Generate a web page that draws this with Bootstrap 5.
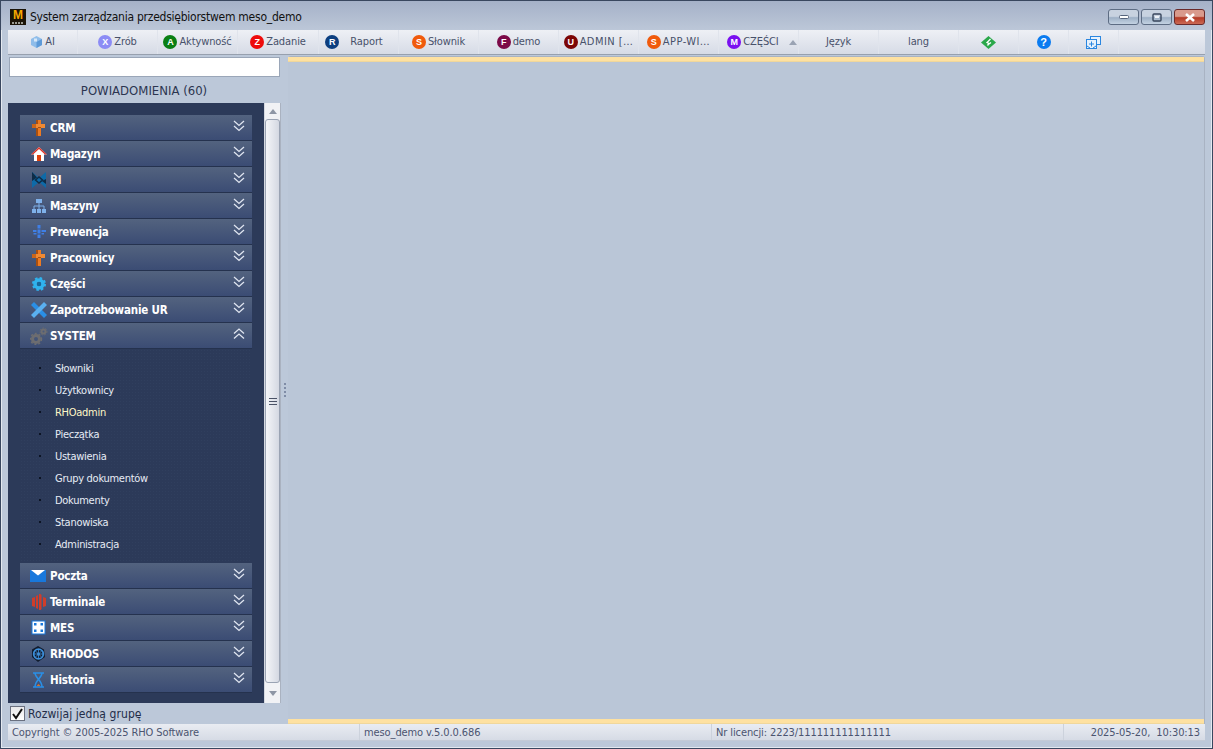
<!DOCTYPE html>
<html lang="pl"><head><meta charset="utf-8"><title>meso_demo</title>
<link href="https://cdn.jsdelivr.net/npm/bootstrap@5.3.0/dist/css/bootstrap.min.css" rel="stylesheet">
<style>
html,body{height:100%;overflow:hidden}
body{background:#bcc8d9;font-family:"DejaVu Sans Condensed","DejaVu Sans",sans-serif;font-size:11px;color:#2f3a55}
.win{width:1213px;height:749px;border:1px solid #39475f;box-shadow:inset 0 0 0 1px #e4e9f0}
.titlebar{height:29px;background:linear-gradient(#a5b1c8,#bcc7d8);padding:3px 0 0 9px;color:#111;font-size:12px;font-family:"DejaVu Sans Condensed","DejaVu Sans",sans-serif;letter-spacing:-.25px}
.logo{width:16px;height:16px;background:#1a1408;color:#f5a800;font:bold 12px/12px "Liberation Sans",sans-serif;text-align:center;letter-spacing:0;position:relative}
.logo::after{content:"";position:absolute;left:2px;right:2px;bottom:1px;height:2px;background-image:linear-gradient(90deg,#9a9a92 2px,transparent 2px);background-size:3px 2px}
.ctl{width:31px;height:16px;margin-left:2px;border:1px solid #5d6c83;border-radius:3px;background:linear-gradient(#c8d2e0 45%,#9eb0c6 55%,#c3d2e2)}
.ctl.closer{width:31px;background:linear-gradient(#d99a8c 45%,#b43a26 55%,#cc6a55);border-color:#6b2a2a}
.wctl{margin-right:7px}
.toolbar{margin:0 7px;height:25px;background:linear-gradient(#eef0f5,#d6dbe6);border-bottom:1px solid #97a0ae}
.tool{height:24px;width:80px;border-right:1px solid #e0e4ec;color:#48516a;font-size:11px;gap:2px;white-space:nowrap;letter-spacing:-.12px}
.tool.w70{width:70px}.tool.w81{width:81px}.tool.w60{width:60px}.tool.w50{width:50px}
.tool.pushed{padding-left:7px}
.tool.pulled{padding-right:9px}
.tool .gapped{margin-left:9px}
.tool .wide{letter-spacing:.45px}
.disc{width:14px;height:14px;border-radius:50%;color:#fff;font:bold 9px/14px "Liberation Sans",sans-serif;text-align:center;flex:none;letter-spacing:0}
.discq{font-size:11px}
.upmark{width:0;height:0;border:4px solid transparent;border-bottom:5px solid #9aa3b3;border-top:0;margin-left:8px}
.content{height:669px;margin:0 7px}
.leftcol{width:273px;flex:none}
.searchbox{display:block;width:271px;height:20px;margin:2px 0 0 1px;border:1px solid #9aa6b8;background:#fff;border-radius:0;padding:0}
.notif{height:26px;color:#2c3550;font-size:13px;width:272px;padding-top:1px}
.navpanel{width:273px;height:600px}
.darkbox{width:256px;background:#2c3a59;padding:12px 12px 0}
.grp{height:26px;width:232px;background:linear-gradient(#53637f,#3b4c74);border-bottom:1px solid #25324e;color:#fff;font:bold 11.5px "DejaVu Sans Condensed","DejaVu Sans",sans-serif;letter-spacing:-.2px;padding:0 6px 0 10px}
.grp .ico{width:18px;height:18px;flex:none;margin-right:2px}
.grp .lbl{flex:1}
.chev{width:14px;height:12px;margin-top:-4px;flex:none}
.subs{width:232px;height:214px;margin:0;padding:9px 0 0;background-color:#2c3a59;background-image:radial-gradient(#303f5e .7px,transparent .8px);background-size:3px 3px}
.sub{height:22px;color:#e7ecf5;font-size:11px;padding-left:35px;position:relative;letter-spacing:-.28px}
.sub.hot{color:#fff7c8}
.sub::before{content:"";position:absolute;left:19px;top:9px;width:2px;height:2px;background:#0c1424}
.sbar{width:17px;background:#f1f2f5;border-left:1px solid #d5d9e1;border-right:1px solid #aab2c0}
.sbtn{height:16px;color:#8e96a5}
.sbtn.lower{height:20px}
.sthumb{flex:1;margin:0;border:1px solid #9aa3b3;border-radius:3px;background:linear-gradient(90deg,#f4f5f8,#d4d8e2)}
.grip3{width:8px;height:7px;border-top:1px solid #4a5266;border-bottom:1px solid #4a5266;position:relative}
.grip3::after{content:"";position:absolute;left:0;right:0;top:2px;height:1px;background:#4a5266}
.splitter{width:7px;flex:none}
.sdots{width:2px;height:14px;background-image:linear-gradient(#7f8ca6 2px,transparent 2px);background-size:2px 4px}
.mainp{flex:1;height:668px;margin-top:1px;background:#bac6d7;border:1px solid #a9b3c3;border-width:1px 1px 0 0;border-radius:3px 3px 0 0}
.yband{height:5px;background:#fee1a1;border-bottom:1px solid #f0d79c}
.chk{height:21px;color:#222c48;font-size:12px;letter-spacing:.07px;gap:3px;padding-left:2px}
.fakechk{width:15px;height:15px;background:linear-gradient(#e8e8ea,#fff);border:1px solid #6a7080}
.statusbar{margin:0 7px;height:17px;background:linear-gradient(#e9ecf2,#d6dbe5);color:#4b5470;font-size:11px;border-bottom:1px solid #c3cad6;letter-spacing:-.1px}
.stcell{height:16px;padding:1px 0 0 4px;white-space:nowrap;border-right:1px solid #ccd2dc;width:352px}
.stcell.last{width:141px;border:0;padding-right:5px}
</style></head><body>
<div class="win d-flex flex-column">
 <div class="titlebar d-flex align-items-center">
  <div class="logo me-1">M</div><span class="flex-grow-1">System zarządzania przedsiębiorstwem meso_demo</span>
  <div class="d-flex wctl">
   <div class="ctl d-flex align-items-center justify-content-center"><svg width="10" height="4"><rect x=".5" y=".5" width="9" height="3" rx="1" fill="#fff" stroke="#56657d"/></svg></div>
   <div class="ctl d-flex align-items-center justify-content-center"><svg width="10" height="9"><rect x="1" y="1" width="8" height="7" rx="1" fill="none" stroke="#38465c" stroke-width="1.4"/><rect x="3" y="3" width="4" height="2" fill="#eef2f8"/></svg></div>
   <div class="ctl closer d-flex align-items-center justify-content-center"><svg width="12" height="9"><path d="M2 1l8 7M10 1l-8 7" stroke="#fff" stroke-width="2.6"/></svg></div>
  </div>
 </div>
 <div class="toolbar d-flex">
  <div class="tool w70 d-flex align-items-center justify-content-center"><svg width="13" height="14" viewBox="0 0 13 14"><path d="M6.500 1 12 4v6l-5.500 3L1 10V4z" fill="#8fbdea"/><path d="M6.500 7 12 4v6l-5.500 3z" fill="#5d9ad8"/><path d="M4 3.500h3v3H4z" fill="#d8e8f8"/></svg><span>AI</span></div>
  <div class="tool d-flex align-items-center justify-content-center"><span class="disc" style="background:#8c8cf5">X</span><span>Zrób</span></div>
  <div class="tool d-flex align-items-center justify-content-center"><span class="disc" style="background:#0a7f14">A</span><span>Aktywność</span></div>
  <div class="tool w81 d-flex align-items-center justify-content-center"><span class="disc" style="background:#ee0b0b">Z</span><span>Zadanie</span></div>
  <div class="tool pulled d-flex align-items-center justify-content-center"><span class="disc" style="background:#0d3f80">R</span><span class="gapped">Raport</span></div>
  <div class="tool d-flex align-items-center justify-content-center"><span class="disc" style="background:#f05a0c">S</span><span>Słownik</span></div>
  <div class="tool d-flex align-items-center justify-content-center"><span class="disc" style="background:#7c0a48">F</span><span>demo</span></div>
  <div class="tool d-flex align-items-center justify-content-center"><span class="disc" style="background:#7c0606">U</span><span class="wide">ADMIN […</span></div>
  <div class="tool d-flex align-items-center justify-content-center"><span class="disc" style="background:#f05a0c">S</span><span class="wide">APP-WI…</span></div>
  <div class="tool pushed d-flex align-items-center justify-content-center"><span class="disc" style="background:#7a10f0">M</span><span>CZĘŚCI</span><span class="upmark"></span></div>
  <div class="tool d-flex align-items-center justify-content-center"><span>Język</span></div>
  <div class="tool d-flex align-items-center justify-content-center"><span>lang</span></div>
  <div class="tool w60 d-flex align-items-center justify-content-center"><svg width="15" height="13" viewBox="0 0 15 13"><path d="M7.500 0 15 6.500 7.500 13 0 6.500z" fill="#2aa84a"/><path d="M9.500 3 6 6.500l2 1-1.500 2M10 6.500 8 8" stroke="#fff" stroke-width="1.300" fill="none"/></svg></div>
  <div class="tool w50 d-flex align-items-center justify-content-center"><span class="disc discq" style="background:#0a7bf0">?</span></div>
  <div class="tool w50 d-flex align-items-center justify-content-center"><svg width="15" height="13" viewBox="0 0 15 13" fill="none" stroke="#2a86e0"><rect x="4.500" y=".5" width="10" height="8" fill="#e8f2fc"/><rect x=".5" y="3.500" width="10" height="9" fill="#e8f2fc"/><path d="M3 8h5M5.500 5.500v5M1 10l3 2M10 10l-3 2"/></svg></div>
 </div>
 <div class="content d-flex">
  <div class="leftcol d-flex flex-column">
   <input class="searchbox" type="text" aria-label="Szukaj">
   <div class="notif d-flex align-items-center justify-content-center">POWIADOMIENIA (60)</div>
   <div class="navpanel d-flex">
    <div class="darkbox">
     <div class="grp d-flex align-items-center"><svg class="ico" viewBox="0 0 18 18"><path d="M6 1h5v16H6z" fill="#ed7a22"/><path d="M6 1h2v16H6z" fill="#a84f10"/><path d="M2 5h13v4H2z" fill="#f08a33"/><path d="M2 5h4v4H2z" fill="#c9651a"/><path d="M8 8h3v1H8z" fill="#a84f10"/></svg><span class="lbl">CRM</span><svg class="chev" viewBox="0 0 14 12" fill="none" stroke="#dfe5f0" stroke-width="1.300"><path d="M2 1l5 4.500L12 1M2 6l5 4.500L12 6"/></svg></div>
     <div class="grp d-flex align-items-center"><svg class="ico" viewBox="0 0 18 18"><path d="M9 2 1 9.500h3V16h10V9.500h3z" fill="#fff"/><path d="M9 2 1 9.500h2L9 4l6 5.500h2z" fill="#d8342a"/><path d="M7 10h4v6H7z" fill="#e2420e"/></svg><span class="lbl">Magazyn</span><svg class="chev" viewBox="0 0 14 12" fill="none" stroke="#dfe5f0" stroke-width="1.300"><path d="M2 1l5 4.500L12 1M2 6l5 4.500L12 6"/></svg></div>
     <div class="grp d-flex align-items-center"><svg class="ico" viewBox="0 0 18 18"><path d="M2 1l7 6 7-6v16l-7-6-7 6z" fill="#0e6aa8"/><path d="M2 1l5 5.500L2 10zM16 8v5l-4-3z" fill="#0f2c47"/><path d="M5.500 9 9 6l3.500 3L9 12z" fill="none" stroke="#0f2c47" stroke-width="1.500"/></svg><span class="lbl">BI</span><svg class="chev" viewBox="0 0 14 12" fill="none" stroke="#dfe5f0" stroke-width="1.300"><path d="M2 1l5 4.500L12 1M2 6l5 4.500L12 6"/></svg></div>
     <div class="grp d-flex align-items-center"><svg class="ico" viewBox="0 0 18 18"><path d="M6 2h6v4H6zM2 12h4v4H2zM7 12h4v4H7zM12 12h4v4h-4z" fill="#7fb1ea"/><path d="M9 6v3M4 12V9h10v3M9 9v3" stroke="#7fb1ea" fill="none"/></svg><span class="lbl">Maszyny</span><svg class="chev" viewBox="0 0 14 12" fill="none" stroke="#dfe5f0" stroke-width="1.300"><path d="M2 1l5 4.500L12 1M2 6l5 4.500L12 6"/></svg></div>
     <div class="grp d-flex align-items-center"><svg class="ico" viewBox="0 0 18 18" fill="#3f7fe6"><path d="M7.500 2h3v3.500h-3zM7.500 6.500h3v4h-3zM7.500 11.500h3V15h-3zM3 7h3.500v2H3zM3.500 10h3v1.500h-3zM11.500 7H16v2h-4.500zM11.500 10H14v1.500h-2.500z"/></svg><span class="lbl">Prewencja</span><svg class="chev" viewBox="0 0 14 12" fill="none" stroke="#dfe5f0" stroke-width="1.300"><path d="M2 1l5 4.500L12 1M2 6l5 4.500L12 6"/></svg></div>
     <div class="grp d-flex align-items-center"><svg class="ico" viewBox="0 0 18 18"><path d="M6 1h5v16H6z" fill="#ed7a22"/><path d="M6 1h2v16H6z" fill="#a84f10"/><path d="M2 5h13v4H2z" fill="#f08a33"/><path d="M2 5h4v4H2z" fill="#c9651a"/><path d="M8 8h3v1H8z" fill="#a84f10"/></svg><span class="lbl">Pracownicy</span><svg class="chev" viewBox="0 0 14 12" fill="none" stroke="#dfe5f0" stroke-width="1.300"><path d="M2 1l5 4.500L12 1M2 6l5 4.500L12 6"/></svg></div>
     <div class="grp d-flex align-items-center"><svg class="ico" viewBox="0 0 18 18"><circle cx="9" cy="9" r="4" fill="none" stroke="#2fb3ee" stroke-width="3.500"/><circle cx="9" cy="9" r="6" fill="none" stroke="#2fb3ee" stroke-width="2" stroke-dasharray="2.500 2.200"/><circle cx="9" cy="9" r="2" fill="#106aa0"/></svg><span class="lbl">Części</span><svg class="chev" viewBox="0 0 14 12" fill="none" stroke="#dfe5f0" stroke-width="1.300"><path d="M2 1l5 4.500L12 1M2 6l5 4.500L12 6"/></svg></div>
     <div class="grp d-flex align-items-center"><svg class="ico" viewBox="0 0 18 18"><path d="M1 4 4 1l13 13-3 3z" fill="#2a8fe6"/><path d="M17 4l-3-3L1 14l3 3z" fill="#5ab0f0"/></svg><span class="lbl">Zapotrzebowanie UR</span><svg class="chev" viewBox="0 0 14 12" fill="none" stroke="#dfe5f0" stroke-width="1.300"><path d="M2 1l5 4.500L12 1M2 6l5 4.500L12 6"/></svg></div>
     <div class="grp d-flex align-items-center"><svg class="ico" viewBox="0 0 18 18"><circle cx="6" cy="12" r="3.500" fill="none" stroke="#6d6d70" stroke-width="3"/><circle cx="6" cy="12" r="5.500" fill="none" stroke="#6d6d70" stroke-width="1.500" stroke-dasharray="2 2"/><circle cx="13.500" cy="4.500" r="2" fill="none" stroke="#6d6d70" stroke-width="2"/><circle cx="13.500" cy="4.500" r="3.500" fill="none" stroke="#6d6d70" stroke-width="1" stroke-dasharray="1.500 1.500"/></svg><span class="lbl">SYSTEM</span><svg class="chev" viewBox="0 0 14 12" fill="none" stroke="#dfe5f0" stroke-width="1.300"><path d="M2 5.500 7 1l5 4.500M2 10.500 7 6l5 4.500"/></svg></div>
     <ul class="subs list-unstyled">
      <li class="sub d-flex align-items-center">Słowniki</li>
      <li class="sub d-flex align-items-center">Użytkownicy</li>
      <li class="sub hot d-flex align-items-center">RHOadmin</li>
      <li class="sub d-flex align-items-center">Pieczątka</li>
      <li class="sub d-flex align-items-center">Ustawienia</li>
      <li class="sub d-flex align-items-center">Grupy dokumentów</li>
      <li class="sub d-flex align-items-center">Dokumenty</li>
      <li class="sub d-flex align-items-center">Stanowiska</li>
      <li class="sub d-flex align-items-center">Administracja</li>
     </ul>
     <div class="grp d-flex align-items-center"><svg class="ico" viewBox="0 0 18 18"><path d="M0 3h16v12H0z" fill="#1878dc"/><path d="M1 3h14L8 8.500z" fill="#fff"/></svg><span class="lbl">Poczta</span><svg class="chev" viewBox="0 0 14 12" fill="none" stroke="#dfe5f0" stroke-width="1.300"><path d="M2 1l5 4.500L12 1M2 6l5 4.500L12 6"/></svg></div>
     <div class="grp d-flex align-items-center"><svg class="ico" viewBox="0 0 18 18" fill="#cf3d2a"><path d="M2 5l3-1v10l-3-1zM6 3l2-1v14l-2-1zM9 1h1.500l1 1v14l-1 1H9zM13 4l3 1v8l-3 1z"/></svg><span class="lbl">Terminale</span><svg class="chev" viewBox="0 0 14 12" fill="none" stroke="#dfe5f0" stroke-width="1.300"><path d="M2 1l5 4.500L12 1M2 6l5 4.500L12 6"/></svg></div>
     <div class="grp d-flex align-items-center"><svg class="ico" viewBox="0 0 18 18"><rect x="2" y="2" width="13" height="13" fill="#fff" stroke="#1878dc"/><path d="M4 4h2.500v2.500H4zM10.500 4H13v2.500h-2.500zM4 10.500h2.500V13H4zM10.500 10.500H13V13h-2.500z" fill="#1878dc"/></svg><span class="lbl">MES</span><svg class="chev" viewBox="0 0 14 12" fill="none" stroke="#dfe5f0" stroke-width="1.300"><path d="M2 1l5 4.500L12 1M2 6l5 4.500L12 6"/></svg></div>
     <div class="grp d-flex align-items-center"><svg class="ico" viewBox="0 0 18 18" fill="none"><path d="M8 1l6 3.500 1 7.500-7 5-6-5V4.500z" fill="#111c2e"/><circle cx="8.500" cy="9" r="4.800" stroke="#3d8ed8" stroke-width="1.800"/><path d="M8.500 4v10M3.500 9h10M5 5.500l7 7M12 5.500l-7 7" stroke="#3d8ed8" stroke-width=".8"/><circle cx="8.500" cy="9" r="1.500" fill="#3d8ed8"/></svg><span class="lbl">RHODOS</span><svg class="chev" viewBox="0 0 14 12" fill="none" stroke="#dfe5f0" stroke-width="1.300"><path d="M2 1l5 4.500L12 1M2 6l5 4.500L12 6"/></svg></div>
     <div class="grp d-flex align-items-center"><svg class="ico" viewBox="0 0 18 18" fill="none" stroke="#2a8fe6" stroke-width="1.500"><path d="M3 2h11M3 16h11M5 2c0 5 7 7 7 14M12 2c0 5-7 7-7 14"/><path d="M6.500 15h4l-2-2z" fill="#d8742a" stroke="none"/></svg><span class="lbl">Historia</span><svg class="chev" viewBox="0 0 14 12" fill="none" stroke="#dfe5f0" stroke-width="1.300"><path d="M2 1l5 4.500L12 1M2 6l5 4.500L12 6"/></svg></div>
    </div>
    <div class="sbar d-flex flex-column">
     <div class="sbtn d-flex align-items-center justify-content-center"><svg width="8" height="5"><path d="M4 0l4 5H0z" fill="#8e96a5"/></svg></div>
     <div class="sthumb d-flex align-items-center justify-content-center"><div class="grip3"></div></div>
     <div class="sbtn lower d-flex align-items-center justify-content-center"><svg width="8" height="5"><path d="M4 5l4-5H0z" fill="#8e96a5"/></svg></div>
    </div>
   </div>
   <div class="chk d-flex align-items-center"><span class="fakechk d-flex align-items-center justify-content-center"><svg width="13" height="13"><path d="M2 7l3 4 6-9" fill="none" stroke="#111" stroke-width="2"/></svg></span><span>Rozwijaj jedną grupę</span></div>
  </div>
  <div class="splitter d-flex align-items-center justify-content-center"><div class="sdots"></div></div>
  <div class="mainp d-flex flex-column justify-content-between"><div class="yband"></div><div class="yband"></div></div>
 </div>
 <div class="statusbar d-flex align-items-center">
  <div class="stcell">Copyright © 2005-2025 RHO Software</div>
  <div class="stcell">meso_demo v.5.0.0.686</div>
  <div class="stcell flex-grow-1">Nr licencji: 2223/111111111111111</div>
  <div class="stcell last text-end">2025-05-20,&nbsp; 10:30:13</div>
 </div>
</div>
</body></html>
